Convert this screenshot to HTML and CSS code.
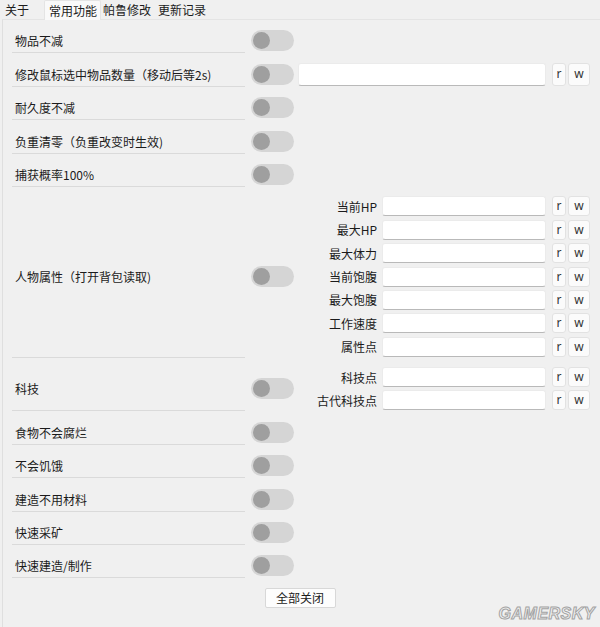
FILE: index.html
```html
<!DOCTYPE html>
<html lang="zh-CN">
<head>
<meta charset="utf-8">
<title>常用功能</title>
<link rel="stylesheet" href="styles.css">
</head>
<body>
<div class="tabs">
  <span class="tab first">关于</span>
  <span class="tab active">常用功能</span>
  <span class="tab third">帕鲁修改</span>
  <span class="tab fourth">更新记录</span>
</div>
<div class="panel">
  <div class="row"><div class="label">物品不减</div><div class="tog"><span class="switch"></span></div><div class="right"></div></div>
  <div class="row"><div class="label">修改鼠标选中物品数量（移动后等2s)</div><div class="tog"><span class="switch"></span></div>
    <div class="right"><div class="field wide"><input class="input" type="text"><button class="btn r">r</button><button class="btn w">w</button></div></div></div>
  <div class="row"><div class="label">耐久度不减</div><div class="tog"><span class="switch"></span></div><div class="right"></div></div>
  <div class="row"><div class="label">负重清零（负重改变时生效)</div><div class="tog"><span class="switch"></span></div><div class="right"></div></div>
  <div class="row"><div class="label">捕获概率100%</div><div class="tog"><span class="switch"></span></div><div class="right"></div></div>
  <div class="row"><div class="label">人物属性（打开背包读取)</div><div class="tog"><span class="switch"></span></div>
    <div class="right"><div class="attrs">
      <div class="attr"><span class="alabel">当前HP</span><input class="input" type="text"><button class="btn r">r</button><button class="btn w">w</button></div>
      <div class="attr"><span class="alabel">最大HP</span><input class="input" type="text"><button class="btn r">r</button><button class="btn w">w</button></div>
      <div class="attr"><span class="alabel">最大体力</span><input class="input" type="text"><button class="btn r">r</button><button class="btn w">w</button></div>
      <div class="attr"><span class="alabel">当前饱腹</span><input class="input" type="text"><button class="btn r">r</button><button class="btn w">w</button></div>
      <div class="attr"><span class="alabel">最大饱腹</span><input class="input" type="text"><button class="btn r">r</button><button class="btn w">w</button></div>
      <div class="attr"><span class="alabel">工作速度</span><input class="input" type="text"><button class="btn r">r</button><button class="btn w">w</button></div>
      <div class="attr"><span class="alabel">属性点</span><input class="input" type="text"><button class="btn r">r</button><button class="btn w">w</button></div>
    </div></div></div>
  <div class="row"><div class="label">科技</div><div class="tog"><span class="switch"></span></div>
    <div class="right"><div class="attrs">
      <div class="attr"><span class="alabel">科技点</span><input class="input" type="text"><button class="btn r">r</button><button class="btn w">w</button></div>
      <div class="attr"><span class="alabel">古代科技点</span><input class="input" type="text"><button class="btn r">r</button><button class="btn w">w</button></div>
    </div></div></div>
  <div class="row"><div class="label">食物不会腐烂</div><div class="tog"><span class="switch"></span></div><div class="right"></div></div>
  <div class="row"><div class="label">不会饥饿</div><div class="tog"><span class="switch"></span></div><div class="right"></div></div>
  <div class="row"><div class="label">建造不用材料</div><div class="tog"><span class="switch"></span></div><div class="right"></div></div>
  <div class="row"><div class="label">快速采矿</div><div class="tog"><span class="switch"></span></div><div class="right"></div></div>
  <div class="row"><div class="label">快速建造/制作</div><div class="tog"><span class="switch"></span></div><div class="right"></div></div>
  <div class="footer"><button class="close-all">全部关闭</button></div>
</div>
<div class="watermark">GAMERSKY</div>
</body>
</html>
```
FILE: styles.css
```css
* { box-sizing: border-box; }
html, body { margin: 0; padding: 0; overflow: hidden; }
body {
  width: 600px;
  height: 627px;
  position: relative;
  background: #f0f0f0;
  color: #1b1b1b;
  font-family: "Noto Sans CJK SC", "Noto Sans", sans-serif;
  font-size: 12px;
}
.tabs {
  display: flex;
  height: 19px;
  align-items: flex-start;
}
.tab {
  line-height: 19px;
  height: 19px;
  padding: 0 3px;
  white-space: nowrap;
}
.tab.first { margin-left: 2px; }
.tab.active {
  margin-left: 12px;
  padding: 0 3px 0 4px;
  height: 20px;
  line-height: 20px;
  background: #f9f9f9;
  border: 1px solid #e4e4e4;
  border-bottom: none;
  border-radius: 2px 2px 0 0;
  position: relative;
  z-index: 1;
}
.tab.third { padding: 0 3px 0 2px; }
.tab.fourth { margin-left: 1px; }
.panel {
  margin-left: 2px;
  border-left: 1px solid #dfdfdf;
  border-top: 1px solid #e4e4e4;
  padding-left: 9px;
  height: 608px;
}
.row { display: flex; }
.label {
  flex: 0 0 233px;
  min-height: 33.4px;
  padding: 9.4px 0 0 3px;
  border-bottom: 1px solid #dadada;
  display: flex;
  align-items: center;
  white-space: nowrap;
}
.tog {
  flex: 0 0 53px;
  padding: 9.4px 0 1px 6px;
  display: flex;
  align-items: center;
}
.switch {
  display: block;
  position: relative;
  width: 43px;
  height: 21px;
  border-radius: 11px;
  background: #d5d5d5;
}
.switch::before {
  content: "";
  position: absolute;
  left: 2px;
  top: 2px;
  width: 17px;
  height: 17px;
  border-radius: 50%;
  background: #9f9f9f;
}
.right {
  flex: 0 0 292px;
  padding: 9.4px 0 1px 0;
}
.field {
  display: flex;
  align-items: center;
  height: 23px;
}
.input {
  display: block;
  margin: 0;
  padding: 0 4px;
  background: #ffffff;
  border: 1px solid #ebebeb;
  border-bottom-color: #b9b9b9;
  border-radius: 3px;
  font: inherit;
  outline: none;
}
.field .input { width: 248px; height: 23px; }
.btn {
  display: block;
  margin: 0;
  padding: 0;
  background: #fbfbfb;
  border: 1px solid #e2e2e2;
  border-radius: 3px;
  font-family: "Noto Sans", "Liberation Sans", sans-serif;
  font-size: 12px;
  color: #333333;
  line-height: 1;
}
.btn.r { width: 14px; margin-left: 6px; }
.btn.w { width: 22px; margin-left: 2px; }
.field .btn { height: 23px; }
.attrs {
  display: flex;
  flex-direction: column;
  gap: 3.4px;
}
.attr {
  display: flex;
  align-items: center;
  height: 20px;
}
.alabel {
  flex: 0 0 79px;
  text-align: right;
  white-space: nowrap;
}
.attr .input { width: 164.3px; height: 20px; margin-left: 4.7px; }
.attr .btn { height: 20px; }
.footer {
  display: flex;
  justify-content: center;
  margin-right: 12px;
  padding-top: 9.3px;
}
.close-all {
  width: 71px;
  height: 20px;
  margin: 0;
  padding: 0;
  background: #fdfdfd;
  border: 1px solid #d8d8d8;
  border-radius: 2px;
  font: inherit;
  color: #1b1b1b;
}
.watermark {
  position: absolute;
  right: 5px;
  bottom: 4px;
  font-family: "Liberation Sans", sans-serif;
  font-weight: bold;
  font-style: italic;
  font-size: 16px;
  letter-spacing: 0.5px;
  color: #f2f2f2;
  -webkit-text-stroke: 1px #a3a3a3;
}
```
